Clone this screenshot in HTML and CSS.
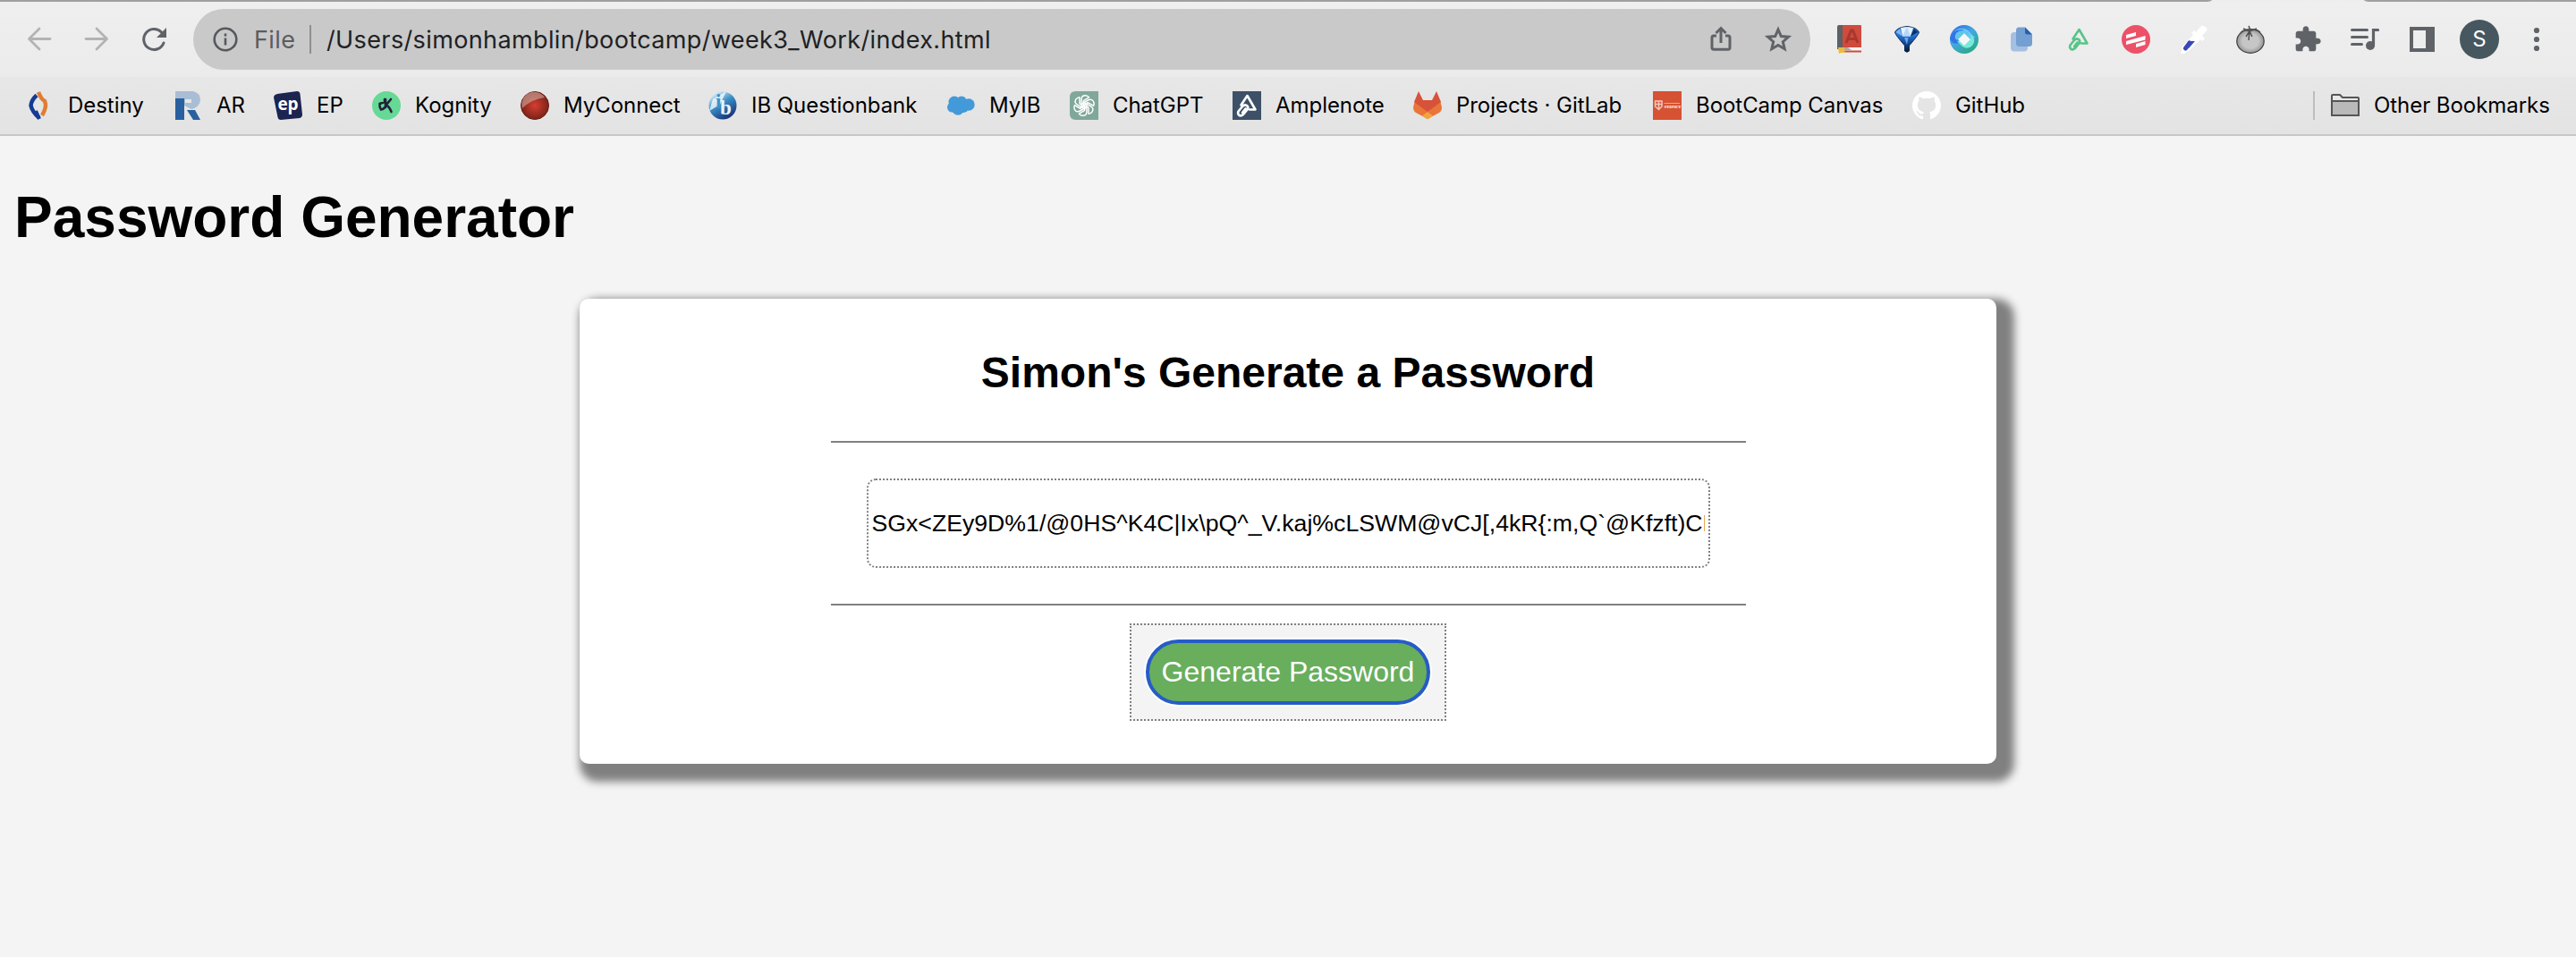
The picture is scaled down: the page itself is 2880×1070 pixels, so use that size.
FILE: index.html
```html
<!DOCTYPE html>
<html lang="en">
<head>
<meta charset="utf-8">
<title>Password Generator</title>
<link rel="stylesheet" href="styles.css">
</head>
<body>
<header class="browser">
  <div class="tabstrip"><span class="tabedge left"></span><span class="tabedge right"></span></div>
  <div class="toolbar">
    <div class="nav">
      <svg class="nav-icon faded" viewBox="0 0 32 32"><path d="M28 15.500H5M16 4 4.500 15.500 16 27"/></svg>
      <svg class="nav-icon faded" viewBox="0 0 32 32"><path d="M4 15.500H27M16 4 27.500 15.500 16 27"/></svg>
      <svg class="nav-icon" viewBox="0 0 32 32"><path d="M27 20A11.500 11.500 0 1 1 24.500 8" stroke-width="3"/><path class="solid" d="M30 3V14H19Z"/></svg>
    </div>
    <div class="omnibox">
      <svg class="info" viewBox="0 0 28 28"><circle cx="14" cy="14" r="12.300"/><path d="M14 12.500V20.500M14 7.500V10.500"/></svg>
      <span class="scheme">File</span>
      <span class="omni-divider"></span>
      <span class="url">/Users/simonhamblin/bootcamp/week3_Work/index.html</span>
      <svg class="omni-icon" viewBox="0 0 32 32"><path d="M11 12H8Q6 12 6 14V25Q6 27.300 8 27.300H24Q26 27.300 26 25V14Q26 12 24 12H21M16 20V4M10.500 9 16 3.500 21.500 9"/></svg>
      <svg class="omni-icon" viewBox="0 0 32 32"><path d="M16 5 19.300 12.600 27.500 13.300 21.300 18.700 23.200 26.700 16 22.500 8.800 26.700 10.700 18.700 4.500 13.300 12.700 12.600Z"/></svg>
    </div>
    <div class="extensions">
      <svg viewBox="0 0 32 32"><path fill="#5c6165" d="M2 2Q2 0 4 0H8V27H2Z"/><path fill="#cf4b3d" d="M8 0H28Q29 0 29 1V25H8Z"/><path fill="#f5f5f5" d="M4 25H29V29H4Z"/><path fill="#aaa" d="M10 25H14L18 28H10Z"/><path fill="#cf4b3d" d="M4 28.500H29V30.500H4Z"/><path fill="#eabb3d" d="M3 25H10V29L12 31H6L4 32Z"/><path fill="none" stroke="#a8382e" stroke-width="3" d="M12 20 17.500 6H19.500L25 20M14 15.500H23"/></svg>
      <svg viewBox="0 0 32 32"><defs><linearGradient id="gem" x1="0" x2="0" y1="0" y2="1"><stop offset=".25" stop-color="#2d82e8"/><stop offset=".6" stop-color="#164f9c"/><stop offset="1" stop-color="#061630"/></linearGradient></defs><path fill="url(#gem)" stroke="#0d2c58" d="M2.500 8Q5 2.500 16 1.500Q27 2.500 29.500 8Q29 11 18.500 23V29Q16 31.500 13.500 29V23Q3 11 2.500 8Z"/><path fill="#e4f0fc" d="M9 3 16 2 23 3 20 12.500H11Z"/><path fill="#b5d6fa" d="M16 2 20 12.500H11Z"/><path fill="#7bb5f2" d="M3.500 8 8 4 11 12.500Z"/><path fill="#0c3068" d="M28.500 8 24 4 20 12.500Z"/><path fill="#62a7f2" d="M13 14H17.500L16 22Z"/></svg>
      <svg viewBox="0 0 32 32"><defs><linearGradient id="swirl" x1="0" x2=".7" y1="0" y2="1"><stop offset="0" stop-color="#2a65e8"/><stop offset=".5" stop-color="#43a9e0"/><stop offset="1" stop-color="#2ba884"/></linearGradient></defs><circle cx="16" cy="16" r="16" fill="url(#swirl)"/><path fill="#6ccdf5" d="M1 15Q2 8 8 5Q14 2 20 6L28 14L23.500 16L16 8.500Z"/><path fill="#3474e5" d="M0 15Q3 4 14 5L20 9L9 20Q4 23 0 15Z"/><path fill="#60c6ea" d="M7 9Q12 4 18 7L22 11L19 12L16 9L8 17Q4 14 7 9Z"/><path fill="#78ead9" d="M24 11Q30 17 25 23Q20 28 14 24L8 18L12 17L16 22.500L23.500 15Z"/><path fill="#f4f8f8" d="M16 9 23 16 16 23 9 16Z"/></svg>
      <svg viewBox="0 0 32 32"><rect x="4" y="8" width="19" height="21.500" rx="4" fill="#a3c0e2"/><path fill="#749fd1" d="M13 2.500H20L28 10.500V20.500Q28 24 24.500 24H13.500Q10 24 10 20.500V6Q10 2.500 13 2.500Z"/><path fill="#2361b5" d="M20 2.500 28 10.500H22.500Q20 10.500 20 8Z"/></svg>
      <svg viewBox="0 0 32 32"><path class="clip" stroke="#58c487" d="M9.500 15.500 16.500 5 25.500 20.500H19M6.500 22.500 11 17Q14 14 16.500 16.500Q18 18 16.500 20.500L12 26Q9 28.500 7 26.500Q5.500 25 6.500 22.500M11 24 14.500 19.500"/></svg>
      <svg viewBox="0 0 32 32"><circle cx="16" cy="16" r="16" fill="#ed5168"/><path fill="#fff" d="M5 11 16 8V12L5 15ZM5 18 26.500 12V16.500L5 22ZM16 21 26.500 18V22L16 25Z"/></svg>
      <svg viewBox="0 0 32 32"><path fill="#fff" d="M2 32 4 24 16 11 14 9 17 6 19 8 25 1Q29 0 32 5L26 12 29 15 26 18 24 16 12 28 6 32Z"/><path stroke="#3749b7" stroke-width="5" stroke-linecap="round" d="M7.500 26 12 20"/><path fill="#3749b7" d="M10 18H18L11 26Z"/></svg>
      <svg viewBox="0 0 32 32"><defs><radialGradient id="tomato"><stop offset=".6" stop-color="#c6c6c6"/><stop offset="1" stop-color="#959595"/></radialGradient></defs><ellipse cx="16" cy="18" rx="15.200" ry="13.300" fill="url(#tomato)" stroke="#3d3d3d" stroke-width="1.200"/><path fill="none" stroke="#505050" stroke-width="1.500" d="M14 1Q16 4 15 7Q9 4 5 9M15 7Q22 3 27 8M15 7 11 13M15 7 14 17M15 7 18 13M8 4 15 7 23 4"/></svg>
      <svg viewBox="0 0 24 24"><path fill="#5f6368" d="M20.500 11H19V7c0-1.100-.9-2-2-2h-4V3.500C13 2.120 11.880 1 10.500 1S8 2.120 8 3.500V5H4c-1.100 0-1.990.9-1.990 2v3.800H3.500c1.490 0 2.700 1.210 2.700 2.700s-1.210 2.700-2.700 2.700H2V20c0 1.100.9 2 2 2h3.800v-1.500c0-1.490 1.210-2.700 2.700-2.700 1.490 0 2.700 1.210 2.700 2.700V22H17c1.100 0 2-.9 2-2v-4h1.500c1.380 0 2.500-1.120 2.500-2.500S21.880 11 20.500 11z"/></svg>
      <svg viewBox="0 0 32 32"><path stroke="#5f6368" stroke-width="3" stroke-linecap="round" d="M1.500 5.500H18.500M1.500 13.500H18.500M1.500 21.500H12.500"/><circle cx="22" cy="23" r="5" fill="#5f6368"/><path fill="none" stroke="#5f6368" stroke-width="3.200" stroke-linecap="round" d="M25.500 23V5.500H30.500"/></svg>
      <svg viewBox="0 0 32 32"><path fill="#5f6368" fill-rule="evenodd" d="M2 2H30V30H2ZM6 6V26H20V6Z"/></svg>
      <span class="avatar">S</span>
      <svg viewBox="0 0 32 32"><g fill="#5f6368"><circle cx="16" cy="6" r="3.100"/><circle cx="16" cy="16" r="3.100"/><circle cx="16" cy="26" r="3.100"/></g></svg>
    </div>
  </div>
  <nav class="bookmarks">
    <a class="bm"><svg viewBox="0 0 32 32"><path fill="none" stroke="#163a94" stroke-width="4.500" d="M13 4.500Q7 10 6.500 16Q8 23 16 30"/><path fill="none" stroke="#e17d32" stroke-width="4.500" d="M15 1Q18 9 22 11Q25 17 19 27"/><path fill="none" stroke="#163a94" stroke-width="4" d="M12 22 16 31"/></svg><span>Destiny</span></a>
    <a class="bm ar"><svg viewBox="0 0 32 32"><path fill="#a9bdd5" fill-rule="evenodd" d="M0 0H20Q28 2 28 10Q27 18 18 20L10 16V9H0ZM11 9V13H18V9Z"/><path fill="#2961a0" d="M0 8H10V32H0ZM13 21H22L28 32H20Z"/></svg><span>AR</span></a>
    <a class="bm"><svg viewBox="0 0 32 32"><path fill="#1c2450" d="M4 3 26 0Q29 0 29.500 3L32 26Q32 29 29 30L8 32Q5 32 4.500 29L0 7Q0 4 4 3Z"/><text x="16" y="21" class="ep">ep</text></svg><span>EP</span></a>
    <a class="bm"><svg viewBox="0 0 32 32"><circle cx="16" cy="16" r="16" fill="#65d995"/><path fill="none" stroke="#22203a" stroke-width="2.600" stroke-linecap="round" d="M14 9V12L8.500 14Q8 18 10 20.500Q14 20 16 15L21 9M16.500 16Q19 17 21.500 23M15 9V18"/></svg><span>Kognity</span></a>
    <a class="bm"><svg viewBox="0 0 32 32"><defs><radialGradient id="ball"><stop offset="0" stop-color="#d63d32"/><stop offset="1" stop-color="#7b2418"/></radialGradient></defs><circle cx="16" cy="16" r="15.500" fill="url(#ball)" stroke="#68200e"/><path fill="#dfc8bd" opacity=".5" d="M2 19A14 14 0 0 1 27 7Q12 9 2 19Z"/></svg><span>MyConnect</span></a>
    <a class="bm"><svg viewBox="0 0 32 32"><defs><linearGradient id="ib" x1="0" x2=".6" y1="0" y2="1"><stop offset=".1" stop-color="#e6f4fa"/><stop offset=".5" stop-color="#3b91c9"/><stop offset="1" stop-color="#18377c"/></linearGradient></defs><circle cx="16" cy="16" r="15.500" fill="url(#ib)"/><path fill="#fff" opacity=".75" d="M1 22 5 9 20 0 13 15Z"/><text x="8" y="19" class="ibt i">i</text><text x="13" y="26" class="ibt">b</text></svg><span>IB Questionbank</span></a>
    <a class="bm"><svg viewBox="0 0 32 32"><g fill="#439ad9"><circle cx="9" cy="12" r="6.500"/><circle cx="17" cy="11" r="5.500"/><circle cx="25" cy="15" r="6.700"/><circle cx="6.500" cy="18" r="5.500"/><circle cx="13" cy="20" r="6.700"/><circle cx="19" cy="18" r="6"/></g></svg><span>MyIB</span></a>
    <a class="bm"><svg viewBox="0 0 24 24"><path fill="#80a89a" d="M5 0H24V24H5Q0 24 0 19V5Q0 0 5 0Z"/><g fill="none" stroke="#fff" stroke-width="1.100" stroke-linejoin="round"><path id="knot" d="M9.800 13.200V6.800Q9.800 3.500 13 3.500Q15 3.500 16.200 5.200L11.500 8V12"/><use href="#knot" transform="rotate(60 12 12)"/><use href="#knot" transform="rotate(120 12 12)"/><use href="#knot" transform="rotate(180 12 12)"/><use href="#knot" transform="rotate(240 12 12)"/><use href="#knot" transform="rotate(300 12 12)"/></g></svg><span>ChatGPT</span></a>
    <a class="bm"><svg viewBox="0 0 32 32"><path fill="#3d5067" d="M0 0H32V32H0Z"/><path class="clip" stroke="#fff" d="M9.500 15.500 16.500 5 25.500 20.500H19M6.500 22.500 11 17Q14 14 16.500 16.500Q18 18 16.500 20.500L12 26Q9 28.500 7 26.500Q5.500 25 6.500 22.500M11 24 14.500 19.500"/></svg><span>Amplenote</span></a>
    <a class="bm"><svg viewBox="0 0 32 32"><path fill="#e9753a" d="M0 18 2 10H30L32 18Q32 22 29 24L16 31 3 24Q0 22 0 18Z"/><path fill="#d6533a" d="M1 12 6 0 11 10H21L26 0 31 12 16 23Z"/><path fill="#f1a440" d="M16 23 22 27.500 16 31.500 10 27.500Z"/></svg><span>Projects · GitLab</span></a>
    <a class="bm"><svg viewBox="0 0 32 32"><path fill="#d65233" d="M0 0H32V32H0Z"/><path fill="none" stroke="#f2c7bb" stroke-width="1.500" d="M2.500 11H10V17L6.500 20.500 2.500 17ZM2.500 14.500H10M6.500 11V20"/><text x="12.500" y="19" class="crest">SYDNEY</text><path stroke="#eba591" d="M12.500 13.500H30"/></svg><span>BootCamp Canvas</span></a>
    <a class="bm"><svg viewBox="0 0 16 16"><path fill="#fff" d="M8 0C3.580 0 0 3.580 0 8c0 3.540 2.290 6.530 5.470 7.590.4.070.55-.17.55-.38 0-.19-.01-.82-.01-1.490-2.010.37-2.530-.49-2.690-.94-.09-.23-.48-.94-.82-1.130-.28-.15-.68-.52-.01-.53.63-.01 1.080.58 1.230.82.72 1.210 1.870.87 2.330.66.070-.52.28-.87.51-1.070-1.780-.2-3.640-.89-3.640-3.950 0-.87.31-1.590.82-2.150-.08-.2-.36-1.020.08-2.120 0 0 .67-.21 2.200.82.640-.18 1.320-.27 2-.27s1.360.09 2 .27c1.530-1.040 2.200-.82 2.200-.82.440 1.100.16 1.920.08 2.120.51.560.82 1.270.82 2.150 0 3.070-1.870 3.750-3.650 3.950.29.250.54.730.54 1.480 0 1.070-.01 1.930-.01 2.200 0 .21.15.46.55.38A8.010 8.010 0 0 0 16 8c0-4.420-3.580-8-8-8z"/></svg><span>GitHub</span></a>
    <a class="bm other"><svg viewBox="0 0 32 32"><path fill="#e9e9e9" stroke="#555" stroke-width="2" d="M1 26V5Q1 4 2 4H10L13 7H30Q31 7 31 8V26Q31 27 30 27H2Q1 27 1 26Z"/><path fill="#b9b9b9" stroke="#555" stroke-width="2" d="M1 11H31V27H1Z"/></svg><span>Other Bookmarks</span></a>
  </nav>
</header>
<main class="page">
  <h1>Password Generator</h1>
  <section class="card">
    <h2>Simon's Generate a Password</h2>
    <div class="result"><input class="password" type="text" readonly value="SGx&lt;ZEy9D%1/@0HS^K4C|Ix\pQ^_V.kaj%cLSWM@vCJ[,4kR{:m,Q`@Kfzft)CEw"></div>
    <div class="action"><button class="generate" type="button">Generate Password</button></div>
  </section>
</main>
</body>
</html>
```
FILE: styles.css
```css
* { box-sizing: border-box; }
body {
  margin: 0;
  height: 1070px;
  background: #f4f4f4;
  color: #000;
  font-family: "Liberation Sans", Arial, sans-serif;
  overflow: hidden;
}
svg { display: block; flex: none; }

.browser { height: 152px; border-bottom: 2px solid #c6c6c6; font-family: Inter, sans-serif; }
.tabstrip { height: 2px; display: flex; justify-content: space-between; background: #eee; }
.tabedge { background: #a0a0a0; }
.tabedge.left { width: 2473px; border-bottom-right-radius: 8px 2px; }
.tabedge.right { width: 237px; border-bottom-left-radius: 8px 2px; }
.toolbar {
  height: 84px;
  padding: 8px 12px 8px 28px;
  display: flex;
  background: linear-gradient(#efefef, #ebebeb);
}
.nav { width: 188px; display: flex; gap: 32px; align-items: center; }
.nav-icon { width: 32px; height: 32px; fill: none; stroke: #5f6368; stroke-width: 2.800; stroke-linecap: round; stroke-linejoin: round; }
.nav-icon.faded { stroke: #b3b3b3; }
.nav-icon .solid { fill: #5f6368; stroke: none; }
.omnibox {
  width: 1808px;
  height: 68px;
  padding: 0 20px 0 22px;
  display: flex;
  align-items: center;
  border-radius: 34px;
  background: #c9c9c9;
  font-size: 27px;
}
.info { width: 28px; height: 28px; fill: none; stroke: #55585c; stroke-width: 2.600; }
.scheme { width: 62px; margin-left: 18px; color: #5a5d61; letter-spacing: 0.4px; }
.omni-divider { width: 2px; height: 32px; background: #8f8f8f; }
.url { flex: 1; margin-left: 17px; color: #202124; white-space: nowrap; letter-spacing: 0.38px; }
.omni-icon { width: 32px; height: 32px; margin-left: 32px; fill: none; stroke: #606367; stroke-width: 3; }
.extensions { margin-left: 12px; display: grid; grid-template-columns: repeat(13, 64px); place-items: center; }
.extensions svg { width: 32px; height: 32px; }
.clip { fill: none; stroke-width: 2.600; stroke-linejoin: round; stroke-linecap: round; }
.avatar {
  width: 44px;
  height: 44px;
  border-radius: 50%;
  background: #47575f;
  color: #fff;
  font-size: 24px;
  line-height: 44px;
  text-align: center;
}
.bookmarks {
  height: 64px;
  padding-left: 28px;
  display: grid;
  grid-template-columns: 168px 110px 110px 166px 210px 266px 138px 182px 202px 268px 290px 448px 1fr;
  align-items: center;
  background: linear-gradient(#e7e7e7, #e3e3e3);
  font-size: 24px;
  letter-spacing: -0.05px;
}
.bm { display: flex; gap: 16px; align-items: center; white-space: nowrap; }
.bm svg { width: 32px; height: 32px; }
.bm span { line-height: 30px; padding-bottom: 1px; }
.bm.ar { gap: 14px; }
.bm.other { height: 32px; padding-left: 18px; border-left: 2px solid #bdbdbd; }
.ep { font: 700 19px "Open Sans", sans-serif; fill: #fff; text-anchor: middle; }
.ibt { font: 700 23px "Liberation Serif", serif; fill: #e8f5fb; }
.ibt.i { fill: #3b91c9; }
.crest { font: 700 5px "Liberation Serif", serif; fill: #fff; letter-spacing: -0.3px; }

.page { padding: 0 16px; }
h1 { margin: 0; padding-top: 54px; height: 182px; font-size: 64px; line-height: 74px; }
.card {
  width: 1584px;
  height: 520px;
  margin: 0 auto;
  display: flex;
  flex-direction: column;
  align-items: center;
  border-radius: 10px;
  background: #fff;
  box-shadow: 10px 10px 10px 10px gray;
}
h2 { margin: 0; padding-top: 55px; height: 159px; font-size: 48px; line-height: 56px; }
.result {
  width: 1023px;
  height: 184px;
  padding: 40px;
  border-top: 2px solid gray;
  border-bottom: 2px solid gray;
}
.password {
  display: block;
  width: 943px;
  height: 100px;
  padding: 2px 4px;
  border: 2px dotted gray;
  border-radius: 10px;
  background: #fff;
  color: #000;
  font: 26.667px "Liberation Sans", Arial, sans-serif;
}
.action {
  width: 354px;
  height: 109px;
  margin-top: 20px;
  display: flex;
  align-items: center;
  justify-content: center;
  border: 2px dotted gray;
  background: #f4f4f4;
}
.generate {
  width: 318px;
  height: 73px;
  padding: 0;
  border: 4px solid #265cc7;
  border-radius: 40px;
  box-shadow: 0 0 0 2px #fff;
  background: #68ae5d;
  color: #fff;
  font: 32px "Liberation Sans", Arial, sans-serif;
}
```
